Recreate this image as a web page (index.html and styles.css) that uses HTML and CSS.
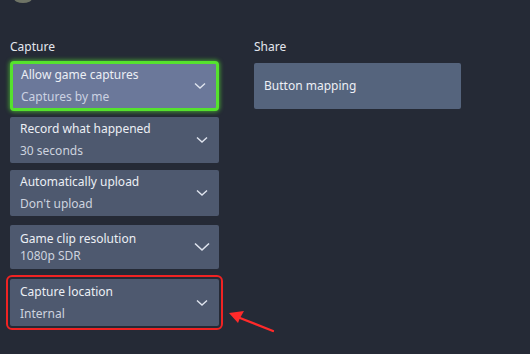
FILE: index.html
```html
<!DOCTYPE html>
<html>
<head>
<meta charset="utf-8">
<link rel="stylesheet" href="styles.css">
</head>
<body>
<div class="avatar"></div>
<div class="page">
  <section class="col capture">
    <div class="label">Capture</div>
    <div class="card selected">
      <div class="texts"><div class="title">Allow game captures</div><div class="sub">Captures by me</div></div>
      <svg class="chev" width="12" height="8" viewBox="0 0 12 8"><path d="M1 1.5 L6 6 L11 1.5" fill="none" stroke="#dfe4ee" stroke-width="1.4"/></svg>
    </div>
    <div class="card">
      <div class="texts"><div class="title">Record what happened</div><div class="sub">30 seconds</div></div>
      <svg class="chev" width="12" height="8" viewBox="0 0 12 8"><path d="M1 1.5 L6 6 L11 1.5" fill="none" stroke="#dfe4ee" stroke-width="1.4"/></svg>
    </div>
    <div class="card">
      <div class="texts"><div class="title">Automatically upload</div><div class="sub">Don't upload</div></div>
      <svg class="chev" width="12" height="8" viewBox="0 0 12 8"><path d="M1 1.5 L6 6 L11 1.5" fill="none" stroke="#dfe4ee" stroke-width="1.4"/></svg>
    </div>
    <div class="card tight">
      <div class="texts"><div class="title">Game clip resolution</div><div class="sub">1080p SDR</div></div>
      <svg class="chev big" width="16" height="10" viewBox="0 0 16 10"><path d="M1 1.5 L8 8 L15 1.5" fill="none" stroke="#dfe4ee" stroke-width="1.6"/></svg>
    </div>
    <div class="card marked">
      <div class="texts"><div class="title">Capture location</div><div class="sub">Internal</div></div>
      <svg class="chev" width="12" height="8" viewBox="0 0 12 8"><path d="M1 1.5 L6 6 L11 1.5" fill="none" stroke="#dfe4ee" stroke-width="1.4"/></svg>
    </div>
  </section>
  <section class="col share">
    <div class="label">Share</div>
    <div class="card plain"><div class="title">Button mapping</div></div>
  </section>
</div>
<svg class="arrow" width="60" height="30" viewBox="0 0 60 30">
  <path d="M45 24 L12 11" stroke="#ff2a2a" stroke-width="2.2" stroke-linecap="round"/>
  <path d="M1 6 L16 4 L12 11 L10 16 Z" fill="#ff2a2a"/>
</svg>
</body>
</html>
```
FILE: styles.css
```css
html, body {
  margin: 0;
  padding: 0;
  background: #252a36;
  width: 530px;
  height: 354px;
  overflow: hidden;
  font-family: "Noto Sans", "Open Sans", sans-serif;
  position: relative;
}
.avatar {
  position: absolute;
  left: 14px;
  top: -6px;
  width: 18px;
  height: 9px;
  border-radius: 50%;
  background: #6f7466;
}
.page {
  display: flex;
  padding: 39px 0 0 10px;
  gap: 35px;
}
.col {
  display: flex;
  flex-direction: column;
}
.capture { width: 209px; gap: 7px; }
.share { width: 207px; gap: 8px; }
.label {
  color: #e4e7ee;
  font-size: 12px;
  line-height: 16px;
}
.capture .label { margin-bottom: -1px; }
.card {
  background: #4e596f;
  height: 46px;
  border-radius: 2px;
  display: flex;
  align-items: center;
  justify-content: space-between;
  padding: 0 11px 0 10px;
  box-sizing: border-box;
  color: #eef0f5;
}
.card .title {
  font-size: 12px;
  line-height: 16px;
  color: #eceff5;
}
.card .sub {
  font-size: 12px;
  line-height: 16px;
  margin-top: 6px;
  color: #cdd3df;
}
.card.tight .sub { margin-top: 1px; }
.card.tight { height: 44px; margin-top: 2px; margin-bottom: 3px; }
.card.selected {
  height: 50px;
  background: #6b789a;
  border: 3px solid #55e22d;
  border-radius: 4px;
  box-shadow: 0 0 4px 1px rgba(90, 230, 50, 0.6);
  padding: 0 10px 0 8px;
  margin-bottom: -1px;
}
.card.selected .sub { color: #cbd2e2; }
.card.marked {
  height: 47px;
  outline: 2px solid #f02323;
  outline-offset: 2px;
  border-radius: 2px;
}
.chev { flex: none; }
.chev.big { margin-right: -2px; }
.card.plain {
  background: #55647d;
  height: 46px;
  padding-left: 10px;
}
.arrow {
  position: absolute;
  left: 228px;
  top: 307px;
}
```
